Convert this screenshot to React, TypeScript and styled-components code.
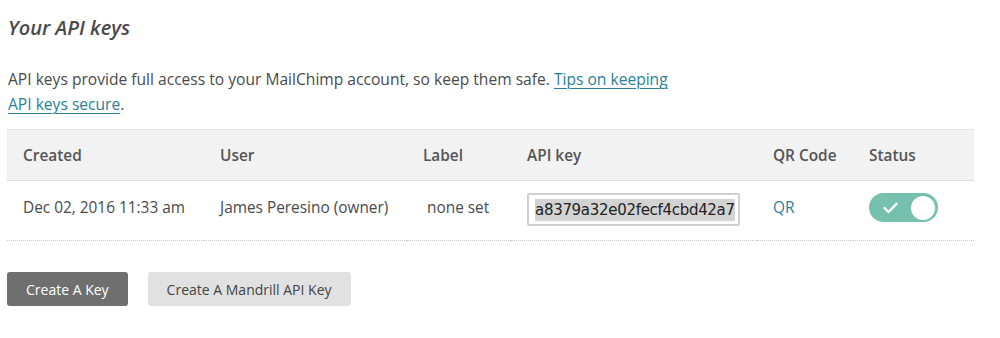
import React from "react";
import styled, { createGlobalStyle } from "styled-components";

const GlobalStyle = createGlobalStyle`
  body {
    margin: 0;
    background: #fff;
    font-family: "Open Sans", "Liberation Sans", sans-serif;
    color: #4a4a4a;
  }
`;

const Page = styled.div`
  padding: 14px 26px 0 7px;
`;

const Heading = styled.h2`
  margin: 0 0 0 1px;
  font-size: 20px;
  font-style: italic;
  font-weight: 600;
  color: #4a4a4a;
  line-height: 28px;
`;

const Intro = styled.p`
  margin: 25px 0 0 1px;
  max-width: 672px;
  font-size: 15.6px;
  line-height: 25px;
  color: #4a4a4a;
`;

const Link = styled.a`
  color: #2a7f96;
  text-decoration: underline;
  text-underline-offset: 3px;
  text-decoration-thickness: 1px;
  white-space: nowrap;
`;

const Table = styled.table`
  margin-top: 12px;
  width: 967px;
  border-collapse: collapse;
  font-size: 15.4px;
  table-layout: fixed;
`;

const HeadRow = styled.tr`
  background: #f2f2f2;
  border-top: 1px solid #e3e3e3;
  border-bottom: 1px solid #dcdcdc;
`;

// widths are content widths; each cell adds 16px of left padding
const Th = styled.th<{ $w?: number }>`
  width: ${(p) => (p.$w ? `${p.$w}px` : "auto")};
  height: 50px;
  padding: 0 0 0 16px;
  text-align: left;
  font-weight: 600;
  color: #555;
`;

const BodyRow = styled.tr`
  border-bottom: 1px dotted #c8c8c8;
`;

const Td = styled.td`
  height: 52px;
  padding: 0 0 7px 16px;
  color: #4a4a4a;
  white-space: nowrap;
`;

const KeyBox = styled.div`
  display: flex;
  align-items: center;
  width: 213px;
  height: 33px;
  box-sizing: border-box;
  border: 2px solid #cfcfcf;
  border-radius: 2px;
  padding: 0 4px 0 6px;
  margin-top: 5px;
  font-family: "DejaVu Sans", "Liberation Sans", sans-serif;
  font-size: 15px;
  color: #222;
  overflow: hidden;
`;

const Selected = styled.span`
  background: #d3d3d3;
  letter-spacing: -0.3px;
  line-height: 22px;
`;

const QrLink = styled.a`
  color: #2a7f96;
  text-decoration: none;
`;

const Toggle = styled.div`
  display: flex;
  align-items: center;
  justify-content: space-between;
  width: 69px;
  height: 29px;
  box-sizing: border-box;
  padding: 0 3px 0 14px;
  border-radius: 15px;
  background: #77c0ad;
  margin-top: 1px;
`;

const Knob = styled.div`
  width: 24px;
  height: 24px;
  border-radius: 50%;
  background: #fff;
`;

const Actions = styled.div`
  display: flex;
  gap: 20px;
  margin-top: 31px;
`;

const Button = styled.button<{ $primary?: boolean }>`
  height: 34px;
  padding: 0 19px;
  border: none;
  border-radius: 3px;
  font-family: "Open Sans", "Liberation Sans", sans-serif;
  font-size: 14px;
  background: ${(p) => (p.$primary ? "#6f6f6f" : "#e1e1e1")};
  color: ${(p) => (p.$primary ? "#fff" : "#444")};
`;

const App: React.FC = () => {
  return (
    <>
      <GlobalStyle />
      <Page>
        <Heading>Your API keys</Heading>
        <Intro>
          API keys provide full access to your MailChimp account, so keep them safe.{" "}
          <Link href="#">Tips on keeping</Link> <Link href="#">API keys secure</Link>.
        </Intro>
        <Table>
          <thead>
            <HeadRow>
              <Th $w={181}>Created</Th>
              <Th $w={187}>User</Th>
              <Th $w={88}>Label</Th>
              <Th $w={230}>API key</Th>
              <Th $w={80}>QR Code</Th>
              <Th>Status</Th>
            </HeadRow>
          </thead>
          <tbody>
            <BodyRow>
              <Td>Dec 02, 2016 11:33 am</Td>
              <Td>James Peresino (owner)</Td>
              <Td>{"\u00a0"}none set</Td>
              <Td>
                <KeyBox>
                  <Selected>a8379a32e02fecf4cbd42a7</Selected>
                </KeyBox>
              </Td>
              <Td>
                <QrLink href="#">QR</QrLink>
              </Td>
              <Td>
                <Toggle>
                  <svg width="15" height="12" viewBox="0 0 15 12">
                    <path d="M1.5 6 L5.5 10 L13.5 1.8" fill="none" stroke="#fff" strokeWidth="2.4" strokeLinecap="round" strokeLinejoin="round" />
                  </svg>
                  <Knob />
                </Toggle>
              </Td>
            </BodyRow>
          </tbody>
        </Table>
        <Actions>
          <Button $primary>Create A Key</Button>
          <Button>Create A Mandrill API Key</Button>
        </Actions>
      </Page>
    </>
  );
};

export default App;
